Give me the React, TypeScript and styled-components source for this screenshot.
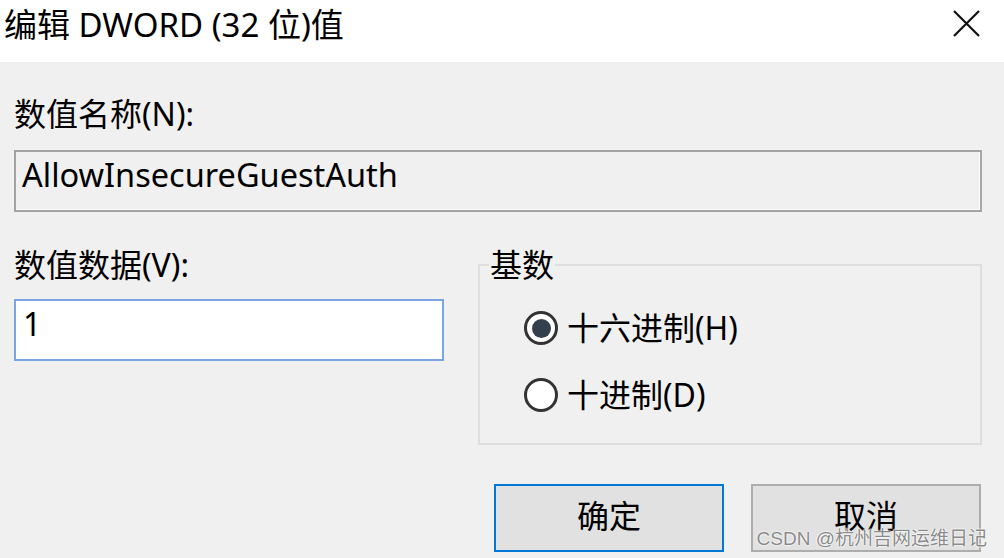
import styled, { createGlobalStyle } from "styled-components";

const GlobalStyle = createGlobalStyle`
  html, body {
    margin: 0;
    padding: 0;
    background: #f0f0f0;
  }
  * {
    box-sizing: border-box;
  }
`;

const uiFont = `"Noto Sans", "Noto Sans CJK SC", sans-serif`;

const Window = styled.div`
  position: relative;
  width: 1004px;
  height: 558px;
  overflow: hidden;
  background: #f0f0f0;
  font-family: ${uiFont};
  color: #000;
`;

const TitleBar = styled.div`
  height: 62px;
  background: #fff;
  display: flex;
  justify-content: space-between;
  align-items: flex-start;
  padding: 0 24px 0 4px;
`;

const Title = styled.div`
  font-size: 33px;
  line-height: 50px;
`;

const CloseButton = styled.div`
  width: 27px;
  height: 27px;
  margin-top: 10px;
  display: flex;
`;

const Body = styled.div`
  padding: 34px 22px 0 14px;
  display: flex;
  flex-direction: column;
`;

const FieldLabel = styled.div`
  font-size: 32px;
  line-height: 36px;
`;

const NameBox = styled.div`
  margin-top: 18px;
  height: 62px;
  border: 2px solid #a3a3a3;
  border-right-color: #a8a8a8;
  box-shadow: inset -1px -1px 0 #fcfcfc;
  padding: 0 6px;
  font-size: 32.5px;
  line-height: 46px;
`;

const DataRow = styled.div`
  margin-top: 35px;
  display: flex;
  gap: 34px;
`;

const DataColumn = styled.div`
  width: 430px;
  display: flex;
  flex-direction: column;
`;

const DataInput = styled.input`
  margin-top: 16px;
  height: 62px;
  width: 100%;
  border: 2px solid #7aa5e2;
  background: #fff;
  padding: 0 7px 14px;
  font-family: ${uiFont};
  font-size: 32px;
  outline: none;
  color: #000;
`;

const BaseGroup = styled.fieldset`
  flex: 1;
  margin: 0;
  border: 2px solid #dedede;
  padding: 0 0 28px 44px;
  display: flex;
  flex-direction: column;
  gap: 27px;
`;

const Legend = styled.legend`
  font-size: 32px;
  line-height: 36px;
  padding: 0 1px;
  margin-left: -35px;
`;

const RadioOption = styled.label`
  display: flex;
  align-items: center;
  height: 40px;
  gap: 9px;
  font-size: 32px;
  line-height: 40px;
  &:first-of-type {
    margin-top: 25px;
  }
`;

const RadioMark = styled.span<{ $checked?: boolean }>`
  width: 34px;
  height: 34px;
  flex-shrink: 0;
  border-radius: 50%;
  border: 3px solid #333;
  background: #fff;
  display: flex;
  align-items: center;
  justify-content: center;
  &::after {
    content: "";
    width: 19px;
    height: 19px;
    border-radius: 50%;
    background: #333f4b;
    display: ${(p) => (p.$checked ? "block" : "none")};
  }
`;

const ButtonRow = styled.div`
  margin-top: 39px;
  display: flex;
  justify-content: flex-end;
  gap: 27px;
  padding-right: 1px;
`;

const DialogButton = styled.button<{ $primary?: boolean }>`
  width: 230px;
  height: 68px;
  background: #e1e1e1;
  border: 2px solid ${(p) => (p.$primary ? "#0078d7" : "#adadad")};
  font-family: ${uiFont};
  font-size: 32px;
  line-height: 40px;
  color: #000;
  padding: 0 0 4px;
`;

const Watermark = styled.div`
  position: absolute;
  right: 17px;
  bottom: 7px;
  font-family: "Liberation Sans", "Noto Sans CJK SC", sans-serif;
  font-size: 19px;
  line-height: 24px;
  color: #8a8a8a;
  text-shadow: 0 0 2px #fff, 0 0 2px #fff, 0 0 1px #fff;
  pointer-events: none;
`;

const App = () => {
  return (
    <Window>
      <GlobalStyle />
      <TitleBar>
        <Title>编辑 DWORD (32 位)值</Title>
        <CloseButton>
          <svg width="27" height="27" viewBox="0 0 27 27">
            <path d="M1 1 L26 26 M26 1 L1 26" stroke="#111" strokeWidth="2.2" />
          </svg>
        </CloseButton>
      </TitleBar>
      <Body>
        <FieldLabel>数值名称(N):</FieldLabel>
        <NameBox>AllowInsecureGuestAuth</NameBox>
        <DataRow>
          <DataColumn>
            <FieldLabel>数值数据(V):</FieldLabel>
            <DataInput defaultValue="1" />
          </DataColumn>
          <BaseGroup>
            <Legend>基数</Legend>
            <RadioOption>
              <RadioMark $checked />
              十六进制(H)
            </RadioOption>
            <RadioOption>
              <RadioMark />
              十进制(D)
            </RadioOption>
          </BaseGroup>
        </DataRow>
        <ButtonRow>
          <DialogButton $primary>确定</DialogButton>
          <DialogButton>取消</DialogButton>
        </ButtonRow>
      </Body>
      <Watermark>CSDN @杭州吉网运维日记</Watermark>
    </Window>
  );
};

export default App;
